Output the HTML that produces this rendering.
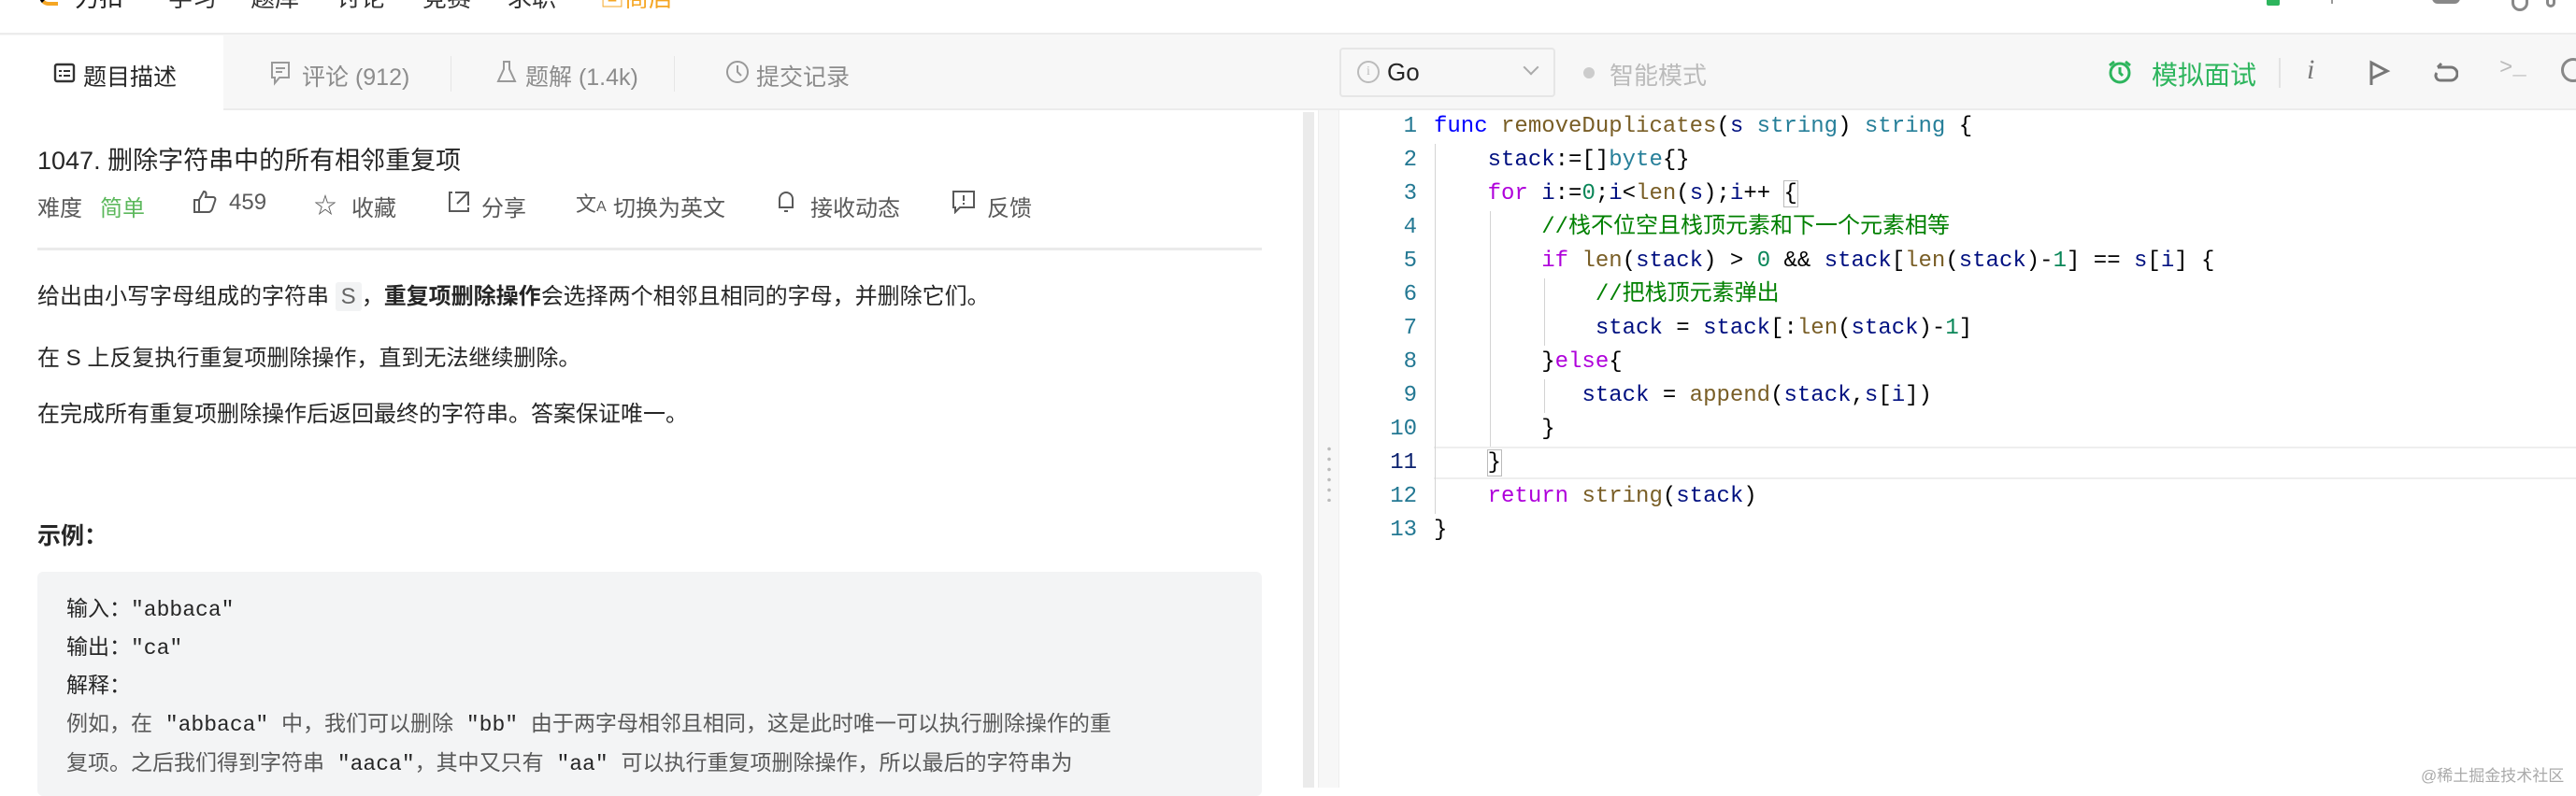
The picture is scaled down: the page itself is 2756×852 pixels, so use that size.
<!DOCTYPE html>
<html><head><meta charset="utf-8">
<style>
*{margin:0;padding:0;box-sizing:border-box}
body{width:2756px;height:843px;overflow:hidden;background:#fff;font-family:"Liberation Sans","Noto Sans CJK SC",sans-serif;color:#333;position:relative}
.a{position:absolute;white-space:nowrap}
.mono{font-family:"Liberation Mono","Noto Sans CJK SC",monospace}
.code .ln{position:absolute;left:1470px;width:46px;text-align:right;font-size:24px;color:#237893;font-family:"Liberation Mono",monospace}
.code .l{position:absolute;left:1534px;font-size:24px;font-family:"Liberation Mono","Noto Sans CJK SC",monospace;color:#000;white-space:pre;line-height:36px}
.kw{color:#0000ff}.fn{color:#795e26}.ty{color:#267f99}.ct{color:#af00db}.cm{color:#008000}.nu{color:#098658}.v{color:#001080}
.g{position:absolute;width:1px;background:#d3d3d3}
</style></head><body>
<!-- top header -->
<div class="a" style="left:0;top:0;width:2756px;height:37px;background:#fff;border-bottom:2px solid #ececec"></div>
<div class="a" style="left:42px;top:-20px;width:20px;height:26px;border-left:4px solid #000;border-bottom:4px solid #f5a623;border-radius:0 0 0 10px"></div>
<div class="a" style="left:80px;top:-22px;font-size:26px;color:#222">力扣</div>
<div class="a" style="left:180px;top:-22px;font-size:26px;color:#333">学习</div>
<div class="a" style="left:268px;top:-22px;font-size:26px;color:#333">题库</div>
<div class="a" style="left:360px;top:-22px;font-size:26px;color:#333">讨论</div>
<div class="a" style="left:452px;top:-22px;font-size:26px;color:#333">竞赛</div>
<div class="a" style="left:543px;top:-22px;font-size:26px;color:#333">求职</div>
<div class="a" style="left:642px;top:-22px;font-size:26px;color:#f5a623">▣商店</div>
<div class="a" style="left:2425px;top:-8px;width:14px;height:14px;background:#2db55d;border-radius:2px"></div>
<div class="a" style="left:2494px;top:-10px;width:2px;height:14px;background:#999"></div>
<div class="a" style="left:2602px;top:-6px;width:30px;height:10px;border-bottom:4px solid #888;border-radius:0 0 6px 6px"></div>
<div class="a" style="left:2687px;top:-12px;width:18px;height:24px;border:3px solid #888;border-radius:9px"></div>
<div class="a" style="left:2724px;top:-12px;width:10px;height:20px;border:3px solid #888;border-radius:5px"></div>

<!-- tab bar -->
<div class="a" style="left:0;top:37px;width:2756px;height:81px;background:#f7f7f7;border-bottom:2px solid #ececec"></div>
<div class="a" style="left:0;top:38px;width:239px;height:80px;background:#fff"></div>
<svg class="a" style="left:57px;top:66px" width="24" height="24" viewBox="0 0 24 24"><rect x="2" y="3" width="20" height="18" rx="2" fill="none" stroke="#333" stroke-width="2.4"/><path d="M6 10h3M11 10h7M6 15h3M11 15h7" stroke="#333" stroke-width="2"/></svg>
<div class="a" style="left:89px;top:63px;font-size:25px;color:#262626">题目描述</div>
<svg class="a" style="left:289px;top:65px" width="22" height="27" viewBox="0 0 22 27"><path d="M2 2h18v16H10l-5 6v-6H2z" fill="none" stroke="#999" stroke-width="2"/><path d="M6 8h10M6 12h7" stroke="#999" stroke-width="2"/></svg>
<div class="a" style="left:323px;top:63px;font-size:25px;color:#8c8c8c">评论 (912)</div>
<div class="a" style="left:482px;top:60px;width:1px;height:38px;background:#e6e6e6"></div>
<svg class="a" style="left:530px;top:64px" width="24" height="26" viewBox="0 0 24 26"><path d="M8 2h8M9 2v8L3 23h18L15 10V2" fill="none" stroke="#999" stroke-width="2"/></svg>
<div class="a" style="left:562px;top:63px;font-size:25px;color:#8c8c8c">题解 (1.4k)</div>
<div class="a" style="left:721px;top:60px;width:1px;height:38px;background:#e6e6e6"></div>
<svg class="a" style="left:776px;top:64px" width="26" height="26" viewBox="0 0 26 26"><circle cx="13" cy="13" r="11" fill="none" stroke="#999" stroke-width="2"/><path d="M13 6v7l4 4" fill="none" stroke="#999" stroke-width="2"/></svg>
<div class="a" style="left:809px;top:63px;font-size:25px;color:#8c8c8c">提交记录</div>

<!-- right toolbar -->
<div class="a" style="left:1433px;top:51px;width:231px;height:53px;border:2px solid #e6e6e6;border-radius:4px;background:#f7f7f7"></div>
<div class="a" style="left:1452px;top:65px;width:24px;height:24px;border:2px solid #bbb;border-radius:50%;font-size:14px;color:#bbb;text-align:center;line-height:20px;font-family:'Liberation Serif',serif">i</div>
<div class="a" style="left:1484px;top:62px;font-size:26px;color:#262626">Go</div>
<div class="a" style="left:1632px;top:66px;width:12px;height:12px;border-right:2px solid #aaa;border-bottom:2px solid #aaa;transform:rotate(45deg)"></div>
<div class="a" style="left:1694px;top:72px;width:12px;height:12px;border-radius:50%;background:#ccc"></div>
<div class="a" style="left:1722px;top:61px;font-size:26px;color:#bbb">智能模式</div>
<svg class="a" style="left:2254px;top:63px" width="28" height="28" viewBox="0 0 28 28"><circle cx="14" cy="15" r="10" fill="none" stroke="#2db55d" stroke-width="3"/><path d="M14 9v6l3 3M3 7l5-4M25 7l-5-4" fill="none" stroke="#2db55d" stroke-width="3"/></svg>
<div class="a" style="left:2302px;top:59px;font-size:28px;color:#2db55d">模拟面试</div>
<div class="a" style="left:2438px;top:62px;width:2px;height:32px;background:#e3e3e3"></div>
<div class="a" style="left:2468px;top:58px;font-size:30px;color:#777;font-style:italic;font-family:'Liberation Serif',serif">i</div>
<svg class="a" style="left:2534px;top:64px" width="24" height="28" viewBox="0 0 24 28"><path d="M3 27V3l17 9-17 8" fill="none" stroke="#777" stroke-width="3"/></svg>
<svg class="a" style="left:2602px;top:64px" width="28" height="28" viewBox="0 0 28 28"><path d="M6 8h14a6 6 0 0 1 0 14H9a5 5 0 0 1-4-8M6 8l4-4" fill="none" stroke="#777" stroke-width="3"/></svg>
<div class="a" style="left:2674px;top:60px;font-size:24px;color:#bbb;font-family:'Liberation Mono',monospace">&gt;_</div>
<div class="a" style="left:2740px;top:62px;width:26px;height:26px;border:3px solid #888;border-radius:50%"></div>

<!-- left content -->
<div class="a" style="left:40px;top:150px;font-size:27px;color:#262626">1047. 删除字符串中的所有相邻重复项</div>
<div class="a" style="left:40px;top:203px;font-size:24px;color:#595959">难度</div>
<div class="a" style="left:107px;top:203px;font-size:24px;color:#5cb85c">简单</div>
<svg class="a" style="left:206px;top:203px" width="26" height="26" viewBox="0 0 26 26"><path d="M2 11h5v13H2zM7 11l5-9c3 0 3 3 2 6h8c2 0 3 2 2 4l-3 9c-1 2-2 3-4 3H7" fill="none" stroke="#595959" stroke-width="2"/></svg>
<div class="a" style="left:245px;top:203px;font-size:24px;color:#595959">459</div>
<div class="a" style="left:336px;top:200px;font-size:24px;color:#595959">☆</div>
<div class="a" style="left:376px;top:203px;font-size:24px;color:#595959">收藏</div>
<svg class="a" style="left:478px;top:203px" width="26" height="26" viewBox="0 0 26 26"><path d="M6 3H3v20h20v-4M9 3h14v14M23 3L11 15" fill="none" stroke="#595959" stroke-width="2"/></svg>
<div class="a" style="left:515px;top:203px;font-size:24px;color:#595959">分享</div>
<div class="a" style="left:616px;top:201px;font-size:22px;color:#595959">文<span style="font-size:16px">A</span></div>
<div class="a" style="left:656px;top:203px;font-size:24px;color:#595959">切换为英文</div>
<svg class="a" style="left:830px;top:203px" width="22" height="26" viewBox="0 0 22 26"><path d="M4 19V10a7 7 0 0 1 14 0v9H3h16M9 23h4" fill="none" stroke="#595959" stroke-width="2"/></svg>
<div class="a" style="left:867px;top:203px;font-size:24px;color:#595959">接收动态</div>
<svg class="a" style="left:1018px;top:203px" width="26" height="26" viewBox="0 0 26 26"><path d="M2 2h22v17H9l-5 5v-5H2z" fill="none" stroke="#595959" stroke-width="2"/><path d="M13 6v6M13 14v2" stroke="#595959" stroke-width="2"/></svg>
<div class="a" style="left:1056px;top:203px;font-size:24px;color:#595959">反馈</div>
<div class="a" style="left:40px;top:265px;width:1310px;height:3px;background:#eaeaea"></div>

<div class="a" style="left:40px;top:297px;font-size:24px;color:#262626">给出由小写字母组成的字符串 <span style="background:#f2f3f4;color:#666;padding:2px 6px;border-radius:3px">S</span>，<b>重复项删除操作</b>会选择两个相邻且相同的字母，并删除它们。</div>
<div class="a" style="left:40px;top:363px;font-size:24px;color:#262626">在 S 上反复执行重复项删除操作，直到无法继续删除。</div>
<div class="a" style="left:40px;top:423px;font-size:24px;color:#262626">在完成所有重复项删除操作后返回最终的字符串。答案保证唯一。</div>
<div class="a" style="left:40px;top:554px;font-size:25px;color:#262626;font-weight:bold">示例：</div>
<div class="a" style="left:40px;top:612px;width:1310px;height:240px;background:#f3f4f5;border-radius:6px"></div>
<div class="a mono" style="left:71px;top:632px;font-size:23px;color:#262626">输入："abbaca"</div>
<div class="a mono" style="left:71px;top:673px;font-size:23px;color:#262626">输出："ca"</div>
<div class="a mono" style="left:71px;top:714px;font-size:23px;color:#262626">解释：</div>
<div class="a mono" style="left:71px;top:755px;font-size:23px;color:#595959">例如，在 <span style="color:#262626">"abbaca"</span> 中，我们可以删除 <span style="color:#262626">"bb"</span> 由于两字母相邻且相同，这是此时唯一可以执行删除操作的重</div>
<div class="a mono" style="left:71px;top:797px;font-size:23px;color:#595959">复项。之后我们得到字符串 <span style="color:#262626">"aaca"</span>，其中又只有 <span style="color:#262626">"aa"</span> 可以执行重复项删除操作，所以最后的字符串为</div>

<!-- scrollbar & splitter -->
<div class="a" style="left:1394px;top:120px;width:12px;height:723px;background:#ebebeb"></div>
<div class="a" style="left:1410px;top:118px;width:23px;height:725px;background:#f7f7f7;border-left:1px solid #eee;border-right:1px solid #eee"></div>
<div class="a" style="left:1420px;top:475px;width:4px;height:62px;background:radial-gradient(circle,#bbb 1.6px,transparent 2px) 0 0/4px 11px repeat-y"></div>

<!-- code -->
<div class="code">
<div class="a" style="left:1534px;top:478px;width:1222px;height:35px;border-top:2px solid #eee;border-bottom:2px solid #eee"></div>
<div class="g" style="left:1535px;top:154px;height:396px"></div>
<div class="g" style="left:1594px;top:226px;height:252px"></div>
<div class="g" style="left:1652px;top:298px;height:72px"></div>
<div class="g" style="left:1652px;top:406px;height:36px"></div>
<div class="ln" style="top:118px;line-height:36px">1</div>
<div class="ln" style="top:154px;line-height:36px">2</div>
<div class="ln" style="top:190px;line-height:36px">3</div>
<div class="ln" style="top:226px;line-height:36px">4</div>
<div class="ln" style="top:262px;line-height:36px">5</div>
<div class="ln" style="top:298px;line-height:36px">6</div>
<div class="ln" style="top:334px;line-height:36px">7</div>
<div class="ln" style="top:370px;line-height:36px">8</div>
<div class="ln" style="top:406px;line-height:36px">9</div>
<div class="ln" style="top:442px;line-height:36px">10</div>
<div class="ln" style="top:478px;line-height:36px;color:#0b216f">11</div>
<div class="ln" style="top:514px;line-height:36px">12</div>
<div class="ln" style="top:550px;line-height:36px">13</div>
<div class="l" style="top:118px"><span class="kw">func</span> <span class="fn">removeDuplicates</span>(<span class="v">s</span> <span class="ty">string</span>) <span class="ty">string</span> {</div>
<div class="l" style="top:154px">    <span class="v">stack</span>:=[]<span class="ty">byte</span>{}</div>
<div class="l" style="top:190px">    <span class="ct">for</span> <span class="v">i</span>:=<span class="nu">0</span>;<span class="v">i</span>&lt;<span class="fn">len</span>(<span class="v">s</span>);<span class="v">i</span>++ <span style="outline:1px solid #bbb">{</span></div>
<div class="l" style="top:226px">        <span class="cm">//栈不位空且栈顶元素和下一个元素相等</span></div>
<div class="l" style="top:262px">        <span class="ct">if</span> <span class="fn">len</span>(<span class="v">stack</span>) &gt; <span class="nu">0</span> &amp;&amp; <span class="v">stack</span>[<span class="fn">len</span>(<span class="v">stack</span>)-<span class="nu">1</span>] == <span class="v">s</span>[<span class="v">i</span>] {</div>
<div class="l" style="top:298px">            <span class="cm">//把栈顶元素弹出</span></div>
<div class="l" style="top:334px">            <span class="v">stack</span> = <span class="v">stack</span>[:<span class="fn">len</span>(<span class="v">stack</span>)-<span class="nu">1</span>]</div>
<div class="l" style="top:370px">        }<span class="ct">else</span>{</div>
<div class="l" style="top:406px">           <span class="v">stack</span> = <span class="fn">append</span>(<span class="v">stack</span>,<span class="v">s</span>[<span class="v">i</span>])</div>
<div class="l" style="top:442px">        }</div>
<div class="l" style="top:478px">    <span style="outline:1px solid #bbb">}</span></div>
<div class="l" style="top:514px">    <span class="ct">return</span> <span class="fn">string</span>(<span class="v">stack</span>)</div>
<div class="l" style="top:550px">}</div>
</div>

<div class="a" style="left:2590px;top:816px;font-size:17px;color:#aaa">@稀土掘金技术社区</div>
</body></html>
